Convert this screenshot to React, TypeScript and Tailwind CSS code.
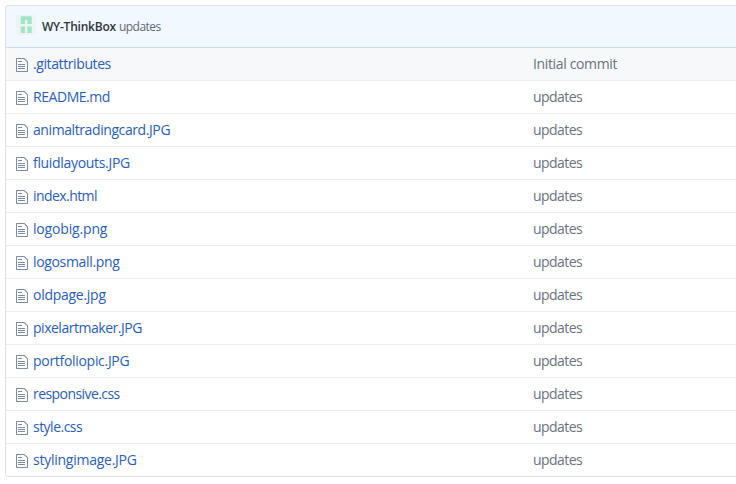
type FileEntry = { name: string; message: string; tracking: string };

const files: FileEntry[] = [
  { name: '.gitattributes', message: 'Initial commit', tracking: 'tracking-[-0.4px]' },
  { name: 'README.md', message: 'updates', tracking: 'tracking-[-0.45px]' },
  { name: 'animaltradingcard.JPG', message: 'updates', tracking: 'tracking-[-0.41px]' },
  { name: 'fluidlayouts.JPG', message: 'updates', tracking: 'tracking-[-0.32px]' },
  { name: 'index.html', message: 'updates', tracking: 'tracking-[-0.57px]' },
  { name: 'logobig.png', message: 'updates', tracking: 'tracking-[-0.17px]' },
  { name: 'logosmall.png', message: 'updates', tracking: 'tracking-[-0.34px]' },
  { name: 'oldpage.jpg', message: 'updates', tracking: 'tracking-[-0.27px]' },
  { name: 'pixelartmaker.JPG', message: 'updates', tracking: 'tracking-[-0.48px]' },
  { name: 'portfoliopic.JPG', message: 'updates', tracking: 'tracking-[-0.3px]' },
  { name: 'responsive.css', message: 'updates', tracking: 'tracking-[-0.57px]' },
  { name: 'style.css', message: 'updates', tracking: 'tracking-[-0.52px]' },
  { name: 'stylingimage.JPG', message: 'updates', tracking: 'tracking-[-0.25px]' },
];

function FileIcon() {
  return (
    <svg viewBox="0 0 12 16" className="mt-0.5 h-4 w-3 shrink-0 fill-[#7c8da3]" aria-hidden="true">
      <path d="M6 5H2V4h4v1zM2 8h7V7H2v1zm0 2h7V9H2v1zm0 2h7v-1H2v1zm10-7.5V14c0 .55-.45 1-1 1H1c-.55 0-1-.45-1-1V2c0-.55.45-1 1-1h7.5L12 4.5zM11 5L8 2H1v12h10V5z" />
    </svg>
  );
}

function Avatar() {
  return (
    <svg viewBox="0 0 20 20" className="mb-0.5 size-5 shrink-0" aria-hidden="true">
      <rect width="20" height="20" rx="2" fill="#edf4f4" />
      <path d="M4.700 1.200h11V9h-4.400V5H9v4H4.700zM4.700 11.500H9V18H4.700zM11.300 11.500h4.400V18h-4.400z" fill="#9ee6c8" />
    </svg>
  );
}

function FileRow({ file }: { file: FileEntry }) {
  return (
    <li className="flex h-[33px] items-center border-b border-[#eaecef] pl-2.5 text-sm first:bg-[#f6f8fa] last:h-8 last:border-b-0">
      <FileIcon />
      <a className={`ml-[5px] w-[500px] shrink-0 text-[#2a60ba] ${file.tracking}`}>{file.name}</a>
      <span className={`text-[#6a737d] ${file.message === 'updates' ? 'tracking-[-0.55px]' : 'tracking-[-0.36px]'}`}>
        {file.message}
      </span>
    </li>
  );
}

export default function App() {
  return (
    <main className="h-[484px] w-[736px] overflow-hidden bg-white pt-[5px] pl-[5px] font-['Open_Sans','Noto_Sans',sans-serif]">
      <section className="w-[760px] overflow-hidden rounded-[3px] border border-[#dfe2e5]">
        <header className="-mx-px -mt-px flex h-[43px] items-center rounded-t-[3px] border border-[#c8ddf0] bg-[#f1f8ff] pb-px pl-2.5 text-xs">
          <Avatar />
          <strong className="mt-0.5 ml-1.5 font-semibold tracking-[-0.23px] text-[#30363d]">WY-ThinkBox</strong>
          <span className="mt-0.5 ml-[3px] tracking-[-0.5px] text-[#5f6b76]">updates</span>
        </header>
        <ul>
          {files.map((file) => (
            <FileRow key={file.name} file={file} />
          ))}
        </ul>
      </section>
    </main>
  );
}
